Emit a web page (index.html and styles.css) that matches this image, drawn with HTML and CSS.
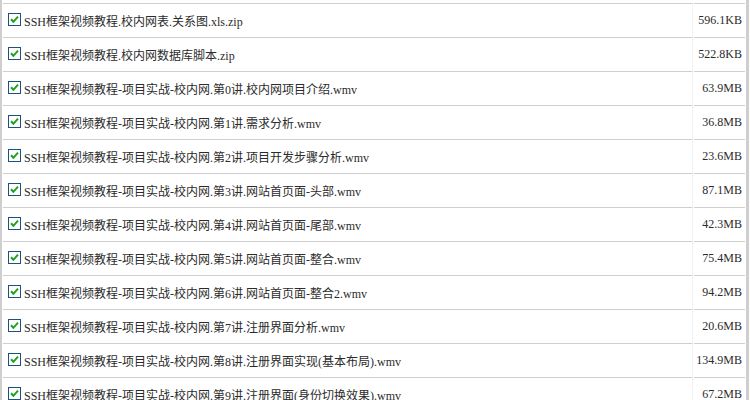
FILE: index.html
```html
<!DOCTYPE html>
<html lang="zh-CN">
<head>
    <meta charset="UTF-8">
    <meta name="viewport" content="width=device-width, initial-scale=1.0">
    <title>文件列表</title>
    <link rel="stylesheet" href="styles.css">
</head>
<body>
    <div class="file-list">
        <table class="file-table">
            <tbody id="fileRows"></tbody>
        </table>
    </div>

    <script>
        const prefix = 'SSH框架视频教程-项目实战-校内网.';
        const files = [
            {name: 'SSH框架视频教程.校内网表.关系图.xls.zip', size: '596.1KB'},
            {name: 'SSH框架视频教程.校内网数据库脚本.zip', size: '522.8KB'},
            {name: prefix + '第0讲.校内网项目介绍.wmv', size: '63.9MB'},
            {name: prefix + '第1讲.需求分析.wmv', size: '36.8MB'},
            {name: prefix + '第2讲.项目开发步骤分析.wmv', size: '23.6MB'},
            {name: prefix + '第3讲.网站首页面-头部.wmv', size: '87.1MB'},
            {name: prefix + '第4讲.网站首页面-尾部.wmv', size: '42.3MB'},
            {name: prefix + '第5讲.网站首页面-整合.wmv', size: '75.4MB'},
            {name: prefix + '第6讲.网站首页面-整合2.wmv', size: '94.2MB'},
            {name: prefix + '第7讲.注册界面分析.wmv', size: '20.6MB'},
            {name: prefix + '第8讲.注册界面实现(基本布局).wmv', size: '134.9MB'},
            {name: prefix + '第9讲.注册界面(身份切换效果).wmv', size: '67.2MB'}
        ];

        // 勾选框图标
        const checkIcon = `
            <svg class="check" width="13" height="13" viewBox="0 0 13 13">
                <rect x="0.5" y="0.5" width="12" height="12" fill="#fff" stroke="#1c5180"/>
                <path d="M3 6.3 L5.4 8.8 L10 3.6" fill="none" stroke="#21a121" stroke-width="2"/>
            </svg>`;

        function renderFiles() {
            const container = document.getElementById('fileRows');
            container.innerHTML = files.map(file => `
                <tr>
                    <td class="file-name"><label>${checkIcon}<span>${file.name}</span></label></td>
                    <td class="file-size">${file.size}</td>
                </tr>
            `).join('');
        }

        renderFiles();
    </script>
</body>
</html>
```

FILE: styles.css
```css
:root {
    --line: #cfcfcf;
    --text: #2b2b2b;
}

* {
    margin: 0;
    padding: 0;
    box-sizing: border-box;
}

body {
    font-family: "Liberation Serif", "Noto Sans CJK SC", serif;
    font-size: 12px;
    color: var(--text);
    background: white;
    overflow: hidden;
}

.file-list {
    width: 749px;
    padding-top: 3px;
    border-left: 2px solid var(--line);
    border-right: 3px solid var(--line);
}

.file-table {
    width: 100%;
    border-collapse: separate;
    border-spacing: 1px 0;
    table-layout: fixed;
}

.file-table td {
    height: 34px;
    border-top: 1px solid var(--line);
    vertical-align: middle;
}

.file-name {
    padding-left: 5px;
    border-right: 1px solid #f3f3f3;
}

.file-name label {
    display: flex;
    align-items: center;
    gap: 3px;
    white-space: nowrap;
}

.check {
    flex: none;
    margin-bottom: 3px;
}

.file-size {
    width: 51px;
    padding-right: 3px;
    text-align: right;
    white-space: nowrap;
}
```
